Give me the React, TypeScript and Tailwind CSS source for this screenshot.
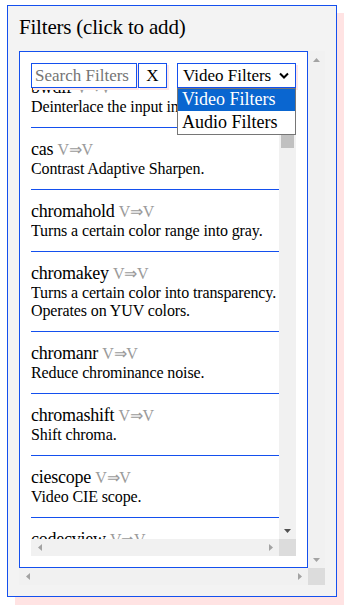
import React from 'react'

const filters = [
  { name: 'bwdif', desc: 'Deinterlace the input image.' },
  { name: 'cas', desc: 'Contrast Adaptive Sharpen.' },
  { name: 'chromahold', desc: 'Turns a certain color range into gray.' },
  { name: 'chromakey', desc: 'Turns a certain color into transparency. Operates on YUV colors.' },
  { name: 'chromanr', desc: 'Reduce chrominance noise.' },
  { name: 'chromashift', desc: 'Shift chroma.' },
  { name: 'ciescope', desc: 'Video CIE scope.' },
  { name: 'codecview', desc: 'Visualize information about some codecs.' },
]

type Dir = 'up' | 'down' | 'left' | 'right'

function Arrow({ dir, dark }: { dir: Dir; dark?: boolean }) {
  const fill = dark ? 'fill-[#505050]' : 'fill-[#a3a3a3]'
  const vertical = dir === 'up' || dir === 'down'
  const points = {
    up: '0,4 3.5,0 7,4',
    down: '0,0 7,0 3.5,4',
    left: '4,0 4,7 0,3.5',
    right: '0,0 4,3.5 0,7',
  }[dir]
  return (
    <div className="flex h-[17px] w-[17px] shrink-0 items-center justify-center">
      <svg width={vertical ? 7 : 4} height={vertical ? 4 : 7} className={fill}>
        <polygon points={points} />
      </svg>
    </div>
  )
}

function VBar({ children, dark }: { children?: React.ReactNode; dark?: boolean }) {
  return (
    <div className="flex h-full w-[17px] shrink-0 flex-col bg-[#f1f1f1]">
      <Arrow dir="up" dark={dark} />
      <div className="flex-1">{children}</div>
      <Arrow dir="down" dark={dark} />
    </div>
  )
}

function HBar() {
  return (
    <div className="flex h-[17px] flex-1 items-center justify-between bg-[#f1f1f1]">
      <Arrow dir="left" />
      <Arrow dir="right" />
    </div>
  )
}

function Corner() {
  return <div className="h-[17px] w-[17px] shrink-0 bg-[#dcdcdc]" />
}

function SearchBar() {
  return (
    <div className="absolute left-0 top-0 flex h-[25px] w-full bg-white text-[17px]">
      <input
        placeholder="Search Filters"
        className="h-[25px] w-[106px] border border-[#1450ee] bg-white pl-[3px] font-['Liberation_Serif',serif] text-[17px] shadow-[2px_2px_0_#ffe6e6] outline-none placeholder:text-[#757575]"
      />
      <button className="ml-[1px] h-[25px] w-[29px] border border-[#1450ee] bg-white text-[17px] leading-[19px] shadow-[2px_2px_0_#ffe6e6]">
        X
      </button>
      <div className="ml-[10px] flex h-[25px] w-[119px] items-center justify-between border border-[#1450ee] bg-white pl-[5px] pr-[6px] leading-[19px] shadow-[2px_2px_0_#ffe6e6]">
        <span>Video Filters</span>
        <svg width="10" height="7" viewBox="0 0 10 7">
          <path d="M1 1.5 L5 5.5 L9 1.5" fill="none" stroke="#000" strokeWidth="2" />
        </svg>
      </div>
      <div className="absolute left-[146px] top-[25px] w-[119px] border border-[#767676] bg-white text-[18px] leading-[20px]">
        <div className="h-[22px] bg-[#0a66d0] pl-[4px] text-white">Video Filters</div>
        <div className="h-[23px] pl-[4px] pt-[1px]">Audio Filters</div>
      </div>
    </div>
  )
}

function FilterList() {
  return (
    <div className="relative flex h-[493px] w-[265px] flex-col">
      <div className="flex h-[476px]">
        <div className="h-[476px] w-[248px] overflow-hidden">
          <ul className="mt-[3px]">
            {filters.map((f) => (
              <li key={f.name} className="border-b border-[#1450ee] py-[11px]">
                <div className="text-[18px] leading-[21px] tracking-[-0.25px]">
                  {f.name} <span className="text-[16px] text-[#9b9b9b]">V⇒V</span>
                </div>
                <div className="text-[16px] leading-[18px] tracking-[-0.12px]">{f.desc}</div>
              </li>
            ))}
          </ul>
        </div>
        <VBar dark>
          <div className="mx-[2px] mt-[15px] h-[53px] bg-[#c1c1c1]" />
        </VBar>
      </div>
      <div className="flex h-[17px]">
        <HBar />
        <Corner />
      </div>
      <SearchBar />
    </div>
  )
}

export default function App() {
  return (
    <div className="h-[608px] w-[344px] overflow-hidden bg-white pl-[7px] pt-[5px] font-['Liberation_Serif',serif] text-black">
      <section className="flex h-[592px] w-[330px] flex-col border border-[#1450ee] bg-[#f3f3f3] pl-[11px] pt-[9px] shadow-[8px_8px_0_#ffe3e3]">
        <h2 className="text-[21px] leading-[24px] tracking-[-0.2px]">Filters (click to add)</h2>
        <div className="mt-[12px] flex h-[534px] w-[306px] flex-col">
          <div className="flex h-[517px]">
            <div className="h-[517px] w-[289px] border border-[#1450ee] bg-white p-[11px]">
              <FilterList />
            </div>
            <VBar />
          </div>
          <div className="flex h-[17px]">
            <HBar />
            <Corner />
          </div>
        </div>
      </section>
    </div>
  )
}
